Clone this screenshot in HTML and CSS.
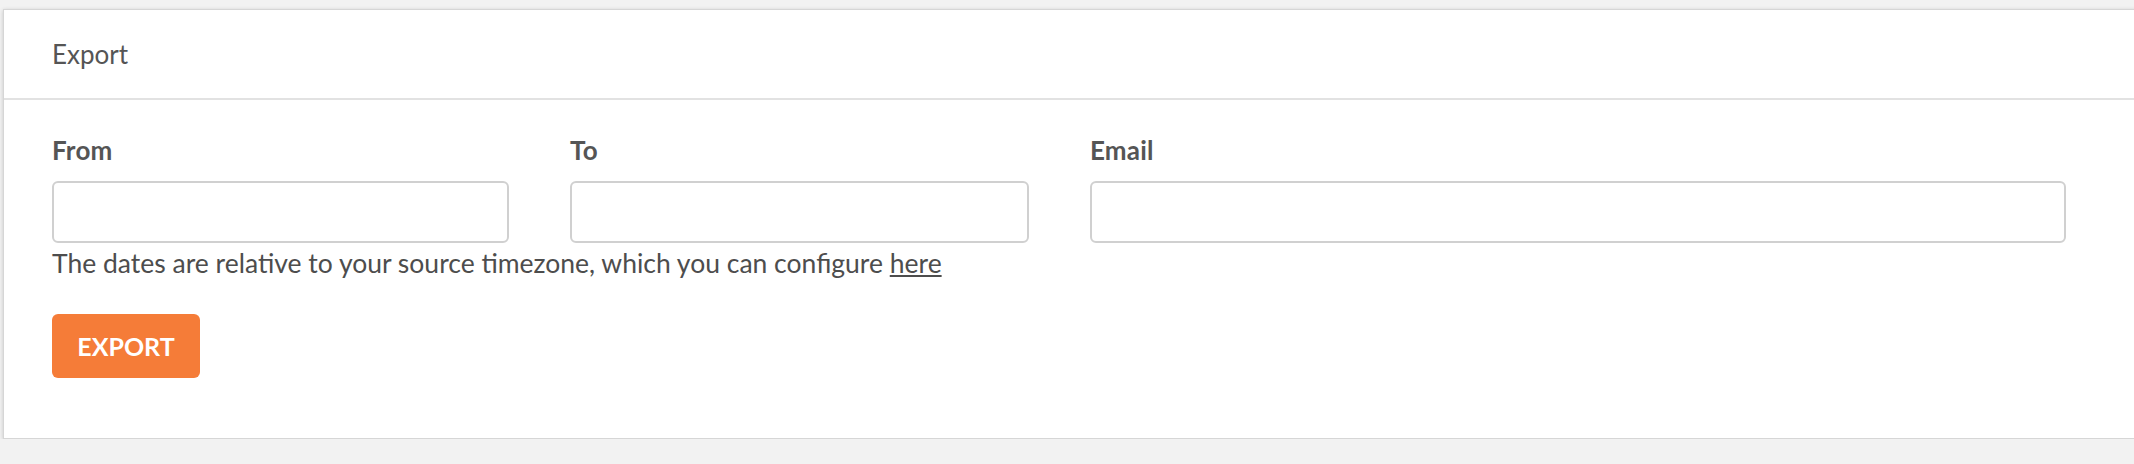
FILE: index.html
```html
<!DOCTYPE html>
<html lang="en">
<head>
  <meta charset="UTF-8">
  <meta name="viewport" content="width=device-width, initial-scale=1.0">
  <title>Export</title>
  <link rel="stylesheet" href="styles.css">
</head>
<body>

<div class="panel">
  <div class="panel-heading">Export</div>
  <div class="panel-body">
    <form class="export-form">
      <div class="fields">
        <div class="field">
          <label for="from">From</label>
          <input type="text" id="from">
        </div>
        <div class="field">
          <label for="to">To</label>
          <input type="text" id="to">
        </div>
        <div class="field">
          <label for="email">Email</label>
          <input type="email" id="email">
        </div>
      </div>
      <p class="help">The dates are relative to your source timezone, which you can configure <a href="#">here</a></p>
      <button type="submit" class="btn-export">EXPORT</button>
    </form>
  </div>
</div>

</body>
</html>
```

FILE: styles.css
```css
html, body {
  margin: 0;
  overflow: hidden;
}
body {
  font-family: Lato, "Open Sans", sans-serif;
  background-color: #f2f2f2;
  color: #555;
  padding: 9px 0 0 3px;
}
.panel {
  background: #fff;
  border: 1px solid #d6d6d6;
  box-shadow: 0 1px 4px rgba(0, 0, 0, 0.18);
  margin-right: -20px;
}
.panel-heading {
  height: 88px;
  display: flex;
  align-items: center;
  padding: 0 48px;
  font-size: 26px;
  border-bottom: 2px solid #e2e2e2;
}
.panel-body {
  padding: 35px 48px 60px;
}
.fields {
  display: grid;
  grid-template-columns: 457px 459px 976px;
  column-gap: 61px;
}
.field label {
  display: block;
  font-size: 26px;
  line-height: 30px;
  font-weight: bold;
  letter-spacing: 0.2px;
}
.field input {
  display: block;
  width: 100%;
  height: 62px;
  margin-top: 16px;
  box-sizing: border-box;
  border: 2px solid #d0d0d0;
  border-radius: 6px;
  font-size: 22px;
  padding: 0 12px;
}
.help {
  margin: 5px 0 0;
  font-size: 26.5px;
  line-height: 30px;
  color: #4d4d4d;
}
.help a {
  color: #4d4d4d;
  text-decoration: underline;
}
.btn-export {
  margin-top: 36px;
  width: 148px;
  height: 64px;
  background: #f57c38;
  color: #fff;
  border: none;
  border-radius: 6px;
  font-family: inherit;
  font-size: 25px;
  font-weight: bold;
  cursor: pointer;
}
```
